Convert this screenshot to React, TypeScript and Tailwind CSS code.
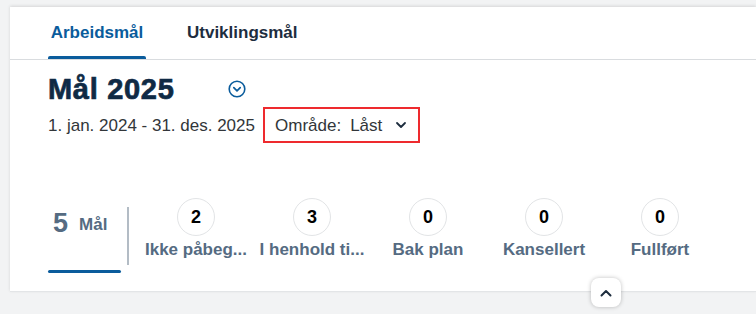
import React from "react";

const stats = [
  { n: "2", label: "Ikke påbeg..." },
  { n: "3", label: "I henhold ti..." },
  { n: "0", label: "Bak plan" },
  { n: "0", label: "Kansellert" },
  { n: "0", label: "Fullført" },
];

export default function App() {
  return (
    <div
      className="w-[756px] h-[314px] bg-[#f2f3f4] flex overflow-hidden relative"
      style={{ fontFamily: '"Liberation Sans", Arial, sans-serif' }}
    >
      <div className="w-[10px] shrink-0" />
      <div className="flex-1 flex flex-col pt-[7px]">
        <div className="bg-white flex flex-col h-[285px] shadow-[0_-1px_3px_rgba(0,0,0,0.12)] border-b border-[#e3e5e7]">
          {/* Tabs */}
          <div className="h-[53px] border-b border-[#d9dcdf] flex items-end pl-[38px] gap-[41px]">
            <div className="flex flex-col items-center">
              <span className="px-[1px] text-[17px] font-bold text-[#0a5c9c] leading-none mb-[15px]">Arbeidsmål</span>
              <div className="h-[3px] w-[98px] bg-[#0a5c9c] rounded-t-[2px]" />
            </div>
            <div className="flex flex-col items-center">
              <span className="text-[17px] font-bold text-[#1d2d3e] leading-none mb-[18px]">Utviklingsmål</span>
            </div>
          </div>

          {/* Header */}
          <div className="pl-[38px] pt-[14px]">
            <div className="flex items-center h-[30px]">
              <span className="text-[29px] font-bold text-[#0f2a45] leading-none tracking-[0.7px]" style={{ WebkitTextStroke: "0.7px #0f2a45" }}>Mål 2025</span>
              <svg className="ml-[53px] mt-[0px]" width="18" height="18" viewBox="0 0 18 18" fill="none">
                <circle cx="9" cy="9" r="7.8" stroke="#0a5c9c" strokeWidth="1.6" />
                <path d="M5.8 7.6 L9 10.8 L12.2 7.6" stroke="#0a5c9c" strokeWidth="1.7" strokeLinecap="round" strokeLinejoin="round" />
              </svg>
            </div>
            <div className="flex items-center mt-[3px]">
              <span className="text-[17px] text-[#32363a] leading-none">1. jan. 2024 - 31. des. 2025</span>
              <div className="ml-[8px] w-[157px] h-[36px] border-[2.5px] border-[#ee2a2e] flex items-center pl-[10px]">
                <span className="text-[17px] text-[#32363a] leading-none">Område:</span>
                <span className="text-[17px] text-[#32363a] leading-none ml-[9px]">Låst</span>
                <svg className="ml-[13px]" width="12" height="12" viewBox="0 0 12 12" fill="none">
                  <path d="M2 4 L6 8 L10 4" stroke="#1d2d3e" strokeWidth="1.8" strokeLinecap="round" strokeLinejoin="round" />
                </svg>
              </div>
            </div>
          </div>

          {/* Stats */}
          <div className="flex items-start pl-[38px] mt-[55px]">
            <div className="flex flex-col w-[73px]">
              <div className="flex items-start h-[62px] pt-[12px] pl-[5px]">
                <span className="text-[27px] font-bold text-[#556b82] leading-none">5</span>
                <span className="text-[17px] font-bold text-[#556b82] leading-none ml-[11px] mt-[6px]">Mål</span>
              </div>
              <div className="h-[3px] bg-[#0a5c9c] rounded-[2px] mt-[10px]" />
            </div>
            <div className="w-[2px] h-[58px] bg-[#b3bcc5] ml-[6px] mt-[9px]" />
            <div className="flex ml-[9px]">
              {stats.map((s, i) => (
                <div key={i} className="w-[116px] flex flex-col items-center">
                  <div className="w-[38px] h-[38px] rounded-full border border-[#e2e4e6] flex items-center justify-center">
                    <span className="text-[18px] font-bold text-black leading-none">{s.n}</span>
                  </div>
                  <span className="mt-[3px] text-[17px] font-bold text-[#556b82] leading-[22px] whitespace-nowrap">{s.label}</span>
                </div>
              ))}
            </div>
          </div>
        </div>
      </div>

      {/* collapse button */}
      <div className="absolute left-[591px] top-[278px] w-[30px] h-[29px] rounded-[8px] bg-white shadow-[0_0_4px_rgba(0,0,0,0.25)] flex items-center justify-center">
        <svg width="14" height="10" viewBox="0 0 14 10" fill="none">
          <path d="M2.5 7.5 L7 3 L11.5 7.5" stroke="#1d2d3e" strokeWidth="2" strokeLinecap="round" strokeLinejoin="round" />
        </svg>
      </div>
    </div>
  );
}
